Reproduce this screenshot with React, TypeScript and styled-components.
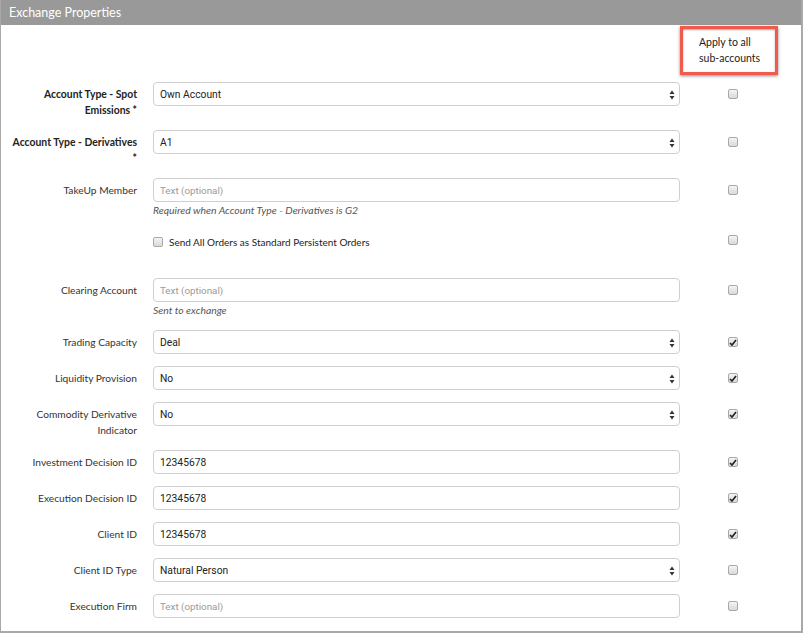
import React from "react";
import styled, { createGlobalStyle } from "styled-components";

const GlobalStyle = createGlobalStyle`
  html, body {
    margin: 0;
    padding: 0;
    background: #fff;
  }
  * {
    box-sizing: border-box;
  }
`;

const Panel = styled.div`
  width: 803px;
  height: 633px;
  border: 1px solid #a9a9a9;
  border-right-width: 2px;
  border-bottom-width: 2px;
  border-top: none;
  font-family: Lato, "Noto Sans", sans-serif;
  color: #333;
  overflow: hidden;
`;

const Header = styled.div`
  height: 25px;
  background: #999;
  color: #fff;
  font-size: 12.5px;
  line-height: 26px;
  padding-left: 8px;
`;

const Body = styled.div`
  padding-top: 1px;
`;

const Row = styled.div<{ $gap?: number }>`
  display: grid;
  grid-template-columns: 152px 527px 106px;
  align-items: start;
  margin-bottom: ${(p) => p.$gap ?? 12}px;
`;

const Label = styled.div<{ $bold?: boolean }>`
  text-align: right;
  padding: 4px 16px 0 8px;
  font-size: ${(p) => (p.$bold ? 10.4 : 10.2)}px;
  line-height: 16px;
  font-weight: ${(p) => (p.$bold ? 700 : 400)};
  color: ${(p) => (p.$bold ? "#222" : "#333")};
`;

const Field = styled.div`
  display: flex;
  flex-direction: column;
`;

const Box = styled.div`
  position: relative;
  height: 24px;
  border: 1px solid #cfcfcf;
  border-radius: 4px;
  padding: 0 6px;
  display: flex;
  align-items: center;
  font-family: Roboto, "Liberation Sans", Arial, sans-serif;
  font-size: 10.3px;
  color: #222;
  background: #fff;
`;

const Placeholder = styled.span`
  color: #9a9a9a;
  font-size: 9.8px;
`;

const Arrows = styled.svg`
  position: absolute;
  right: 4px;
  top: 7px;
`;

const Help = styled.div`
  font-size: 10.4px;
  font-style: italic;
  line-height: 14px;
  color: #555;
  padding-top: 1px;
`;

const CheckCell = styled.div<{ $h?: number }>`
  height: ${(p) => p.$h ?? 24}px;
  display: flex;
  align-items: center;
  justify-content: center;
`;

const Check = styled.span`
  width: 10px;
  height: 10px;
  border: 1px solid #a9a9a9;
  border-radius: 2px;
  background: linear-gradient(#f4f4f4, #d9d9d9);
  display: inline-flex;
  align-items: center;
  justify-content: center;
`;

const ApplyRow = styled.div`
  display: grid;
  grid-template-columns: 679px 98px;
  margin-bottom: 7px;
`;

const ApplyBox = styled.div`
  grid-column: 2;
  height: 49px;
  border: 3px solid #f15b4b;
  box-shadow: 0 1px 3px rgba(0, 0, 0, 0.45), inset 0 1px 2px rgba(0, 0, 0, 0.35);
  padding: 5px 0 0 16px;
  font-size: 10.5px;
  line-height: 16px;
  color: #222;
`;

const InlineCheck = styled.label`
  display: flex;
  align-items: center;
  gap: 6px;
  height: 24px;
  font-size: 10px;
  color: #222;
`;

const CheckBox = ({ checked }: { checked?: boolean }) => (
  <Check>
    {checked && (
      <svg width="8" height="7" viewBox="0 0 8 7">
        <path d="M1 4 L3 6 L7 1" stroke="#222" strokeWidth="1.6" fill="none" />
      </svg>
    )}
  </Check>
);

const SelectArrows = () => (
  <Arrows width="6" height="10" viewBox="0 0 6 10">
    <path d="M3 0.5 L5.5 4 L0.5 4 Z" fill="#333" />
    <path d="M3 9.5 L5.5 6 L0.5 6 Z" fill="#333" />
  </Arrows>
);

type Item = {
  label: string[];
  bold?: boolean;
  value?: string;
  select?: boolean;
  help?: string;
  checked?: boolean;
};

const items: Item[] = [
  { label: ["Account Type - Spot", "Emissions *"], bold: true, value: "Own Account", select: true },
  { label: ["Account Type - Derivatives", "*"], bold: true, value: "A1", select: true },
  { label: ["TakeUp Member"], help: "Required when Account Type - Derivatives is G2" },
];

const items2: Item[] = [
  { label: ["Clearing Account"], help: "Sent to exchange" },
  { label: ["Trading Capacity"], value: "Deal", select: true, checked: true },
  { label: ["Liquidity Provision"], value: "No", select: true, checked: true },
  { label: ["Commodity Derivative", "Indicator"], value: "No", select: true, checked: true },
  { label: ["Investment Decision ID"], value: "12345678", checked: true },
  { label: ["Execution Decision ID"], value: "12345678", checked: true },
  { label: ["Client ID"], value: "12345678", checked: true },
  { label: ["Client ID Type"], value: "Natural Person", select: true },
  { label: ["Execution Firm"] },
];

const FormRow = ({ item }: { item: Item }) => (
  <Row $gap={item.help ? 13 : 12}>
    <Label $bold={item.bold}>
      {item.label.map((l, i) => (
        <div key={i}>{l}</div>
      ))}
    </Label>
    <Field>
      <Box>
        {item.value ? item.value : <Placeholder>Text (optional)</Placeholder>}
        {item.select && <SelectArrows />}
      </Box>
      {item.help && <Help>{item.help}</Help>}
    </Field>
    <CheckCell>
      <CheckBox checked={item.checked} />
    </CheckCell>
  </Row>
);

export default function App() {
  return (
    <>
      <GlobalStyle />
      <Panel>
        <Header>Exchange Properties</Header>
        <Body>
          <ApplyRow>
            <ApplyBox>
              Apply to all
              <br />
              sub-accounts
            </ApplyBox>
          </ApplyRow>
          {items.map((it) => (
            <FormRow key={it.label.join(" ")} item={it} />
          ))}
          <Row $gap={24}>
            <div />
            <InlineCheck>
              <CheckBox />
              Send All Orders as Standard Persistent Orders
            </InlineCheck>
            <CheckCell $h={20}>
              <CheckBox />
            </CheckCell>
          </Row>
          {items2.map((it) => (
            <FormRow key={it.label.join(" ")} item={it} />
          ))}
        </Body>
      </Panel>
    </>
  );
}
